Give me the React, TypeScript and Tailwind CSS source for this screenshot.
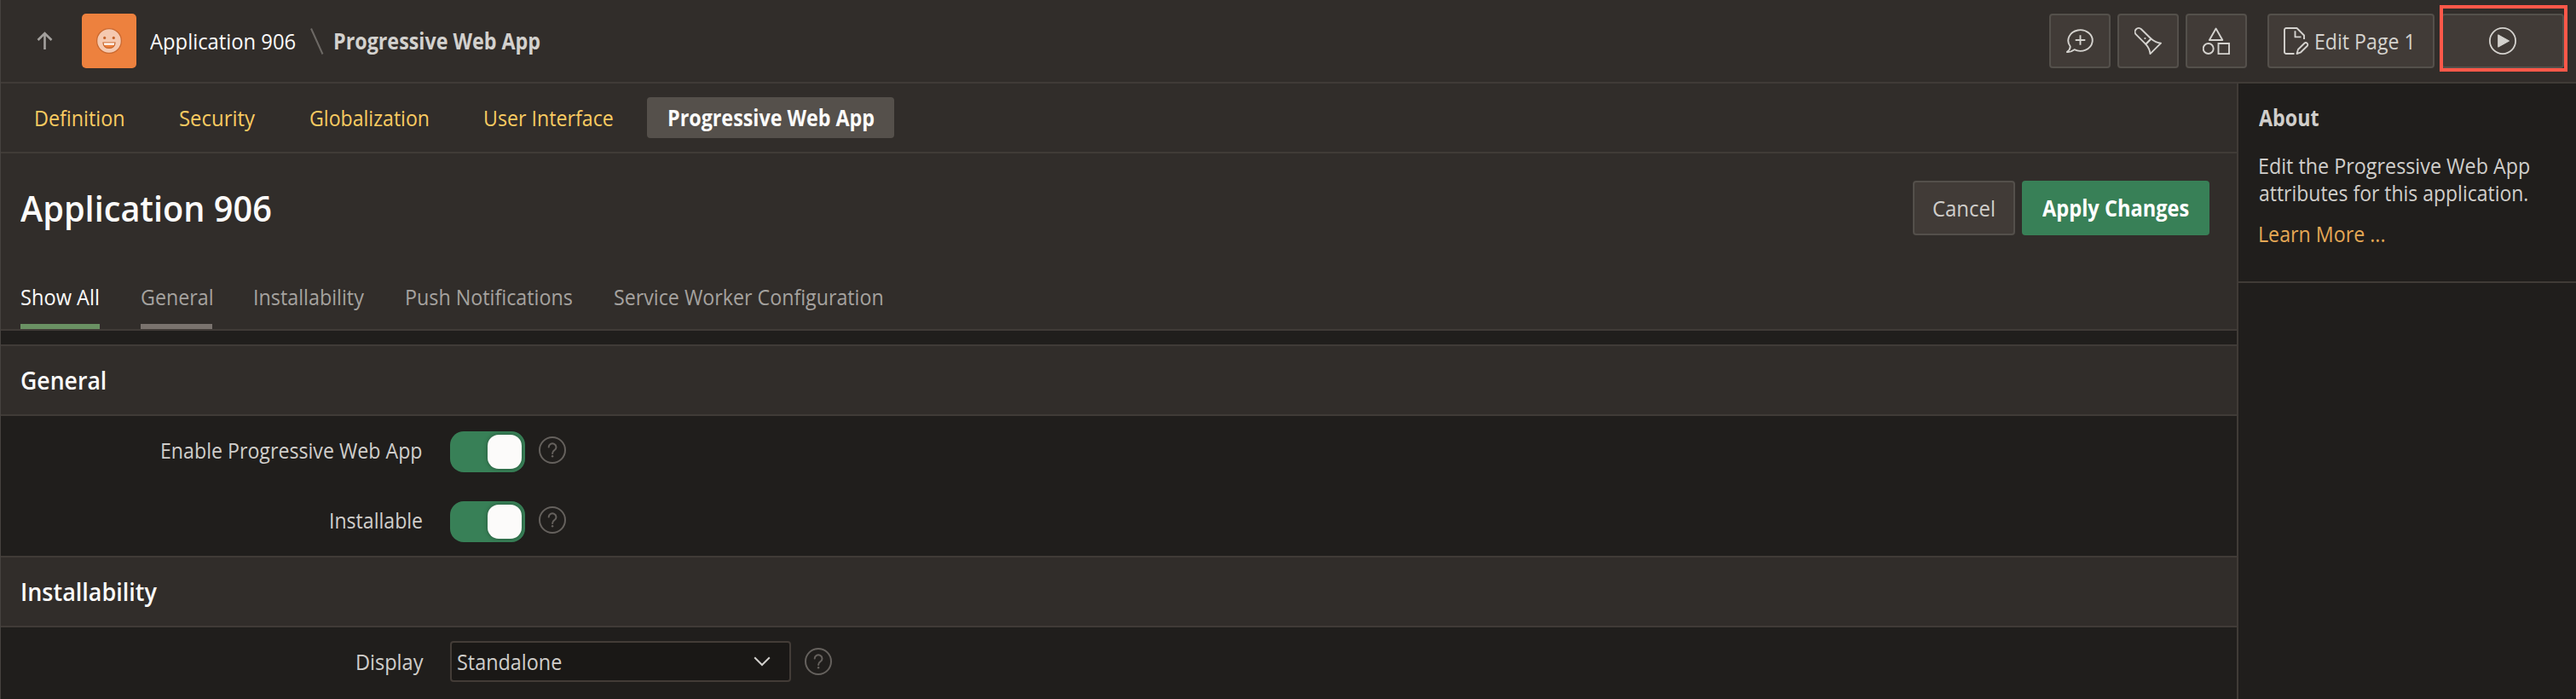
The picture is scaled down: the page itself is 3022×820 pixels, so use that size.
import type { ReactNode } from "react";

/** Single line of condensed text: `box` sets its laid-out width, `scale` its glyph width. */
function Label({ children, box, scale, className = "" }: { children: ReactNode; box: string; scale: string; className?: string }) {
  return (
    <span className={`block shrink-0 whitespace-nowrap ${box} ${className}`}>
      <span className={`block w-max origin-left ${scale}`}>{children}</span>
    </span>
  );
}

function HelpIcon() {
  return (
    <svg viewBox="0 0 32 32" className="size-8 shrink-0" fill="none" stroke="#65615d" strokeWidth="2">
      <circle cx="16" cy="16" r="15" />
      <path d="M11.7 12.6a4.4 4.2 0 1 1 6.7 3.5c-1.7 1.1-2.3 1.8-2.3 3.9" strokeLinecap="round" />
      <circle cx="16.1" cy="23.2" r="1.2" fill="#65615d" stroke="none" />
    </svg>
  );
}

function Toggle() {
  return (
    <span className="flex h-12 w-[88px] shrink-0 justify-end rounded-[16px] bg-[#388057] p-1">
      <span className="size-10 rounded-[13px] bg-[#fcfbfa] shadow-[0_0_5px_rgba(0,0,0,0.35)]" />
    </span>
  );
}

const iconButton = "flex h-16 w-[72px] items-center justify-center rounded-[4px] border-2 border-[#54504b] bg-[#413b37]";

function Header() {
  return (
    <header className="flex h-[98px] items-center border-b-2 border-[#403b37] bg-[#312d2a] pr-[14px] pl-[43px]">
      <svg viewBox="0 0 20 24" className="mr-8 h-6 w-5 shrink-0" fill="none" stroke="#a3a09d" strokeWidth="2.6">
        <path d="M9.5 22V3M1.5 11l8-8 8 8" />
      </svg>
      <div className="ml-px flex size-16 shrink-0 items-center justify-center rounded-[5px] bg-[#ed813e]">
        <svg viewBox="0 0 32 32" className="size-8">
          <circle cx="16" cy="16" r="14.4" fill="#f5c9b0" stroke="#cc6a30" strokeWidth="1.3" />
          <circle cx="10.7" cy="12.4" r="1.6" fill="#c4642c" />
          <circle cx="21.3" cy="12.4" r="1.6" fill="#c4642c" />
          <path d="M9 18h14c0 4-3 6.4-7 6.4S9 22 9 18z" fill="#ed813e" stroke="#c4642c" strokeWidth="1.2" />
          <path d="M9.7 18.6h12.6l-.5 2.2H10.2z" fill="#fff" />
        </svg>
      </div>
      <Label box="w-[187px]" scale="scale-x-[0.915]" className="ml-4 font-medium text-[#fcfbfa]">Application 906</Label>
      <svg viewBox="0 0 18 34" className="h-[34px] w-[18px] shrink-0" fill="none" stroke="#6d6965" strokeWidth="2">
        <path d="M2 2.5l13.5 30" />
      </svg>
      <Label box="w-[243px]" scale="scale-x-[0.896]" className="ml-[10px] font-bold text-[#d3d1ce]">Progressive Web App</Label>
      <div className="ml-auto flex items-center gap-2">
        <button className={iconButton}>
          <svg viewBox="0 0 32 32" className="size-8" fill="none" stroke="#d4d2ce" strokeWidth="1.9" strokeLinejoin="round">
            <path d="M9.5 26.2A14.2 12.3 0 1 0 4.6 22.2C5 25 3 27.5.8 29 4 29.5 7 28 9.5 26.2z" />
            <path d="M16.5 9.2v11.6M10.7 15h11.6" />
          </svg>
        </button>
        <button className={iconButton}>
          <svg viewBox="0 0 32 32" className="size-8" fill="none" stroke="#d4d2ce" strokeWidth="1.9" strokeLinejoin="round">
            <path d="M19.5 13.5 8 2.2A4.35 4.35 0 0 0 1.8 8.3L13.3 19.8z" />
            <path d="M19.5 13.5Q25 18 31 18.7L18.5 31.2Q18 25 13.3 19.8z" />
            <circle cx="12.4" cy="13" r="1.1" fill="#d4d2ce" stroke="none" />
          </svg>
        </button>
        <button className={iconButton}>
          <svg viewBox="0 0 32 32" className="size-8" fill="none" stroke="#d4d2ce" strokeWidth="1.9">
            <path d="M15.6 1.5 23.3 15H7.9z" strokeLinejoin="round" />
            <circle cx="6.7" cy="25" r="6" />
            <path d="M18.5 19H31v12.2H18.5z" />
          </svg>
        </button>
        <button className="ml-4 flex h-16 w-[196px] items-center rounded-[4px] border-2 border-[#54504b] bg-[#413b37] pl-[17px] text-[#d4d2ce]">
          <svg viewBox="0 0 32 32" className="mr-[4px] size-8 shrink-0" fill="none" stroke="#d4d2ce" strokeWidth="1.9" strokeLinejoin="round">
            <path d="M12.5 31H3a2 2 0 0 1-2-2V3a2 2 0 0 1 2-2h12.5L24 9.5V14" />
            <path d="M13.5 4.2v7.2h7" />
            <path d="M15.5 31 17 26l7.4-7.2a2.25 2.25 0 0 1 3.2 3.2L20.2 29.3z" />
          </svg>
          <Label box="w-[121px]" scale="scale-x-[0.89]" className="font-medium">Edit Page 1</Label>
        </button>
        <button className="relative flex h-16 w-[144px] items-center justify-center rounded-[4px] border-2 border-[#54504b] bg-[#413b37]">
          <svg viewBox="0 0 32 32" className="size-8">
            <circle cx="16" cy="16" r="15.1" fill="none" stroke="#d4d2ce" strokeWidth="1.8" />
            <path d="M10.7 8.8 23.6 16 10.7 23.2z" fill="#d4d2ce" stroke="#d4d2ce" strokeWidth="1" strokeLinejoin="round" />
          </svg>
          <span className="absolute -top-3 -right-1.5 -bottom-1.5 -left-1 border-4 border-[#ff5849]" />
        </button>
      </div>
    </header>
  );
}

function SectionHeading({ children, scale }: { children: ReactNode; scale: string }) {
  return (
    <h2 className="flex h-[84px] items-center border-y-2 border-[#403b37] bg-[#312d2a] pl-6 text-[29px] font-semibold text-[#fcfbfa]">
      <Label box="w-[180px]" scale={scale}>{children}</Label>
    </h2>
  );
}

function FieldRow({ label, labelScale, labelBox, labelLift = "", children }: { label: string; labelScale: string; labelBox: string; labelLift?: string; children: ReactNode }) {
  return (
    <div className="flex h-12 items-center">
      <div className={`flex w-[528px] shrink-0 justify-end pr-[31px] ${labelLift}`}>
        <Label box={labelBox} scale={labelScale}>{label}</Label>
      </div>
      {children}
    </div>
  );
}

export default function App() {
  return (
    <div className="relative flex h-[820px] w-[3022px] flex-col overflow-hidden bg-[#201e1c] font-['Open_Sans','Liberation_Sans',sans-serif] text-[26px] leading-8 font-[450] text-[#d0cecb] before:absolute before:inset-y-0 before:left-0 before:w-px before:bg-[#46423f]">
      <Header />
      <div className="flex min-h-0 flex-1">
        <main className="flex w-[2624px] shrink-0 flex-col">
          <nav className="flex h-[82px] shrink-0 items-center border-b-2 border-[#403b37] bg-[#312d2a] pl-10 text-[#facb61]">
            <Label box="w-[170px]" scale="scale-x-[0.898]">Definition</Label>
            <Label box="w-[153px]" scale="scale-x-[0.92]">Security</Label>
            <Label box="w-[204px]" scale="scale-x-[0.889]">Globalization</Label>
            <Label box="w-[192px]" scale="scale-x-[0.892]">User Interface</Label>
            <div className="flex h-12 w-[290px] items-center rounded-[4px] bg-[#55504b] pl-6 font-bold text-[#fcfbfa]">
              <Label box="w-[244px]" scale="scale-x-[0.896]">Progressive Web App</Label>
            </div>
          </nav>
          <div className="flex h-[208px] shrink-0 flex-col border-b-2 border-[#403b37] bg-[#312d2a]">
            <div className="flex h-[128px] items-center pr-8 pl-6">
              <h1 className="text-[42px] leading-[56px] font-semibold text-[#fcfbfa]">
                <Label box="w-[297px]" scale="scale-x-[0.944]">Application 906</Label>
              </h1>
              <button className="ml-auto flex h-16 w-[120px] items-center justify-center rounded-[4px] border-2 border-[#54504b] bg-[#413b37]">
                <Label box="w-[74px]" scale="scale-x-[0.92]" className="text-left">Cancel</Label>
              </button>
              <button className="ml-2 flex h-16 w-[220px] items-center justify-center rounded-[4px] bg-[#388057] font-bold text-white">
                <Label box="w-[172px]" scale="scale-x-[0.908]">Apply Changes</Label>
              </button>
            </div>
            <div className="flex h-[78px] gap-12 pl-6 text-[#a5a29f]">
              <div className="h-full border-b-6 border-[#6a9163] pt-6 text-[#fcfbfa]">
                <Label box="w-[93px]" scale="scale-x-[0.908]">Show All</Label>
              </div>
              <div className="h-full border-b-6 border-[#7a736e] pt-6">
                <Label box="w-[84px]" scale="scale-x-[0.895]">General</Label>
              </div>
              <div className="pt-6"><Label box="w-[130px]" scale="scale-x-[0.897]">Installability</Label></div>
              <div className="pt-6"><Label box="w-[197px]" scale="scale-x-[0.896]">Push Notifications</Label></div>
              <div className="pt-6"><Label box="w-[318px]" scale="scale-x-[0.893]">Service Worker Configuration</Label></div>
            </div>
          </div>
          <div className="mt-4">
            <SectionHeading scale="scale-x-[0.918]">General</SectionHeading>
          </div>
          <div className="flex h-[164px] shrink-0 flex-col gap-[34px] pt-[18px]">
            <FieldRow label="Enable Progressive Web App" labelBox="w-[309px]" labelScale="scale-x-[0.891]" labelLift="pb-1">
              <Toggle />
              <span className="-mt-1 ml-4"><HelpIcon /></span>
            </FieldRow>
            <FieldRow label="Installable" labelBox="w-[111px]" labelScale="scale-x-[0.888]" labelLift="pb-1">
              <Toggle />
              <span className="-mt-1 ml-4"><HelpIcon /></span>
            </FieldRow>
          </div>
          <SectionHeading scale="scale-x-[0.93]">Installability</SectionHeading>
          <div className="pt-4">
            <FieldRow label="Display" labelBox="w-[80px]" labelScale="scale-x-[0.905]">
              <div className="flex h-12 w-[400px] items-center justify-between rounded-[4px] border-2 border-[#433c37] bg-[#1a1816] pr-[22px] pl-[6px]">
                <Label box="w-[125px]" scale="scale-x-[0.9]">Standalone</Label>
                <svg viewBox="0 0 20 12" className="h-3 w-5" fill="none" stroke="#d0cecb" strokeWidth="2">
                  <path d="M1.2 1.2 10 10l8.8-8.8" />
                </svg>
              </div>
              <span className="ml-4"><HelpIcon /></span>
            </FieldRow>
          </div>
        </main>
        <aside className="flex-1 border-l-2 border-[#403b37]">
          <div className="h-[234px] border-b-2 border-[#403b37] pt-6 pl-6">
            <Label box="w-[72px]" scale="scale-x-[0.895]" className="font-bold">About</Label>
            <div className="mt-6">
              <Label box="w-[320px]" scale="scale-x-[0.897]" className="-ml-px">Edit the Progressive Web App</Label>
              <Label box="w-[320px]" scale="scale-x-[0.883]">attributes for this application.</Label>
            </div>
            <Label box="w-[150px]" scale="scale-x-[0.893]" className="mt-4 -ml-px text-[#e5a855]">Learn More ...</Label>
          </div>
        </aside>
      </div>
    </div>
  );
}
